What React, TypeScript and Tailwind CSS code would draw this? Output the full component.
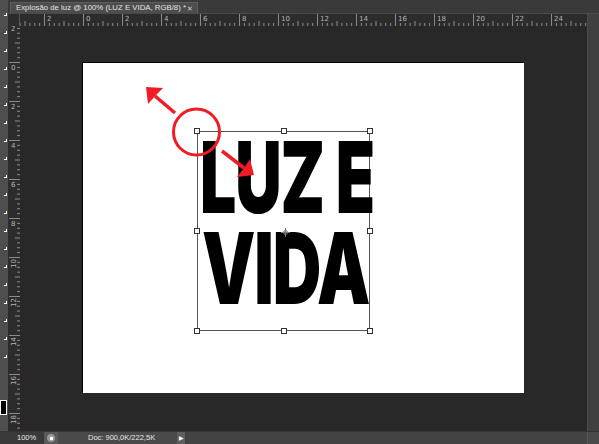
import React from "react";

const MAJOR = 39;

function TopRuler() {
  const labels = ["2", "0", "2", "4", "6", "8", "10", "12", "14", "16", "18", "20", "22", "24"];
  const ticks: React.ReactNode[] = [];
  for (let k = -1; k < 15; k++) {
    const base = 24 + k * MAJOR;
    for (let s = 1; s < 8; s++) {
      const x = base + (s * MAJOR) / 8;
      const h = s === 4 ? 5 : 3;
      ticks.push(<line key={`t${k}-${s}`} x1={x + 0.5} x2={x + 0.5} y1={12 - h} y2={12} stroke="#8a8a8a" strokeWidth={1} />);
    }
  }
  return (
    <svg width={567} height={12} className="block">
      {ticks}
      {labels.map((l, k) => {
        const x = 24 + k * MAJOR;
        return (
          <g key={k}>
            <line x1={x + 0.5} x2={x + 0.5} y1={0} y2={12} stroke="#8a8a8a" strokeWidth={1} />
            <text x={x + 3} y={7} fontSize={7} fill="#b5b5b5" fontFamily="'DejaVu Sans', sans-serif">{l}</text>
          </g>
        );
      })}
    </svg>
  );
}

function LeftRuler() {
  const labels = ["2", "0", "2", "4", "6", "8", "10", "12", "14", "16", "18"];
  const ticks: React.ReactNode[] = [];
  for (let k = -1; k < 11; k++) {
    const base = -3 + k * MAJOR;
    for (let s = 1; s < 8; s++) {
      const y = base + (s * MAJOR) / 8;
      const w = s === 4 ? 5 : 3;
      ticks.push(<line key={`t${k}-${s}`} y1={y + 0.5} y2={y + 0.5} x1={12 - w} x2={12} stroke="#8a8a8a" strokeWidth={1} />);
    }
  }
  return (
    <svg width={12} height={405} className="block">
      {ticks}
      {labels.map((l, k) => {
        const y = -3 + k * MAJOR;
        return (
          <g key={k}>
            <line y1={y + 0.5} y2={y + 0.5} x1={1} x2={12} stroke="#8a8a8a" strokeWidth={1} />
            {l.length === 1 ? (
              <text x={3} y={y + 8} fontSize={7} fill="#b5b5b5" fontFamily="'DejaVu Sans', sans-serif">{l}</text>
            ) : (
              <text x={0} y={0} fontSize={7} fill="#b5b5b5" fontFamily="'DejaVu Sans', sans-serif" transform={`translate(8 ${y + 2}) rotate(-90)`} textAnchor="end">{l}</text>
            )}
          </g>
        );
      })}
    </svg>
  );
}

function Handle({ x, y }: { x: number; y: number }) {
  return (
    <div
      className="absolute w-[6px] h-[6px] bg-white border border-[#333]"
      style={{ left: x - 3, top: y - 3 }}
    />
  );
}

export default function App() {
  const marks = Array.from({ length: 20 }, (_, i) => i);
  return (
    <div className="w-[599px] h-[444px] relative flex flex-col overflow-hidden bg-[#282828] font-['Liberation_Sans',sans-serif]">
      <div className="flex-1 flex min-h-0">
        {/* left tools strip */}
        <div className="w-[8px] h-full bg-[#4e4e4e] flex flex-col items-end pt-[13px] shrink-0">
          {marks.map((i) => (
            <div key={i} className="h-[18px] w-full flex items-start justify-end pr-[1px]">
              <div className="w-[3px] h-[3px] border-r-[1.5px] border-b-[1.5px] border-white" />
            </div>
          ))}
          <div className="w-[7px] h-[15px] border border-white bg-black mr-[1px] mt-[27px]" />
        </div>

        <div className="flex-1 flex flex-col min-w-0">
          {/* tab bar */}
          <div className="h-[14px] bg-[#3a3a3a] flex items-end pl-[2px] border-b border-[#4a4a4a]">
            <div className="h-[11px] w-[188px] bg-[#4d4d4d] border-t border-l border-r border-[#5c5c5c] flex items-center pl-[5px] pr-[4px] overflow-hidden">
              <span className="text-[7.8px] leading-none text-[#e4e4e4] whitespace-nowrap">Explosão de luz @ 100% (LUZ E VIDA, RGB/8) *</span>
              <span className="ml-auto text-[7px] leading-none text-[#d0d0d0]">✕</span>
            </div>
          </div>

          <div className="flex-1 flex min-h-0">
            <div className="flex-1 flex flex-col min-w-0">
              <div className="h-[12px] flex bg-[#2c2c2c]">
                <div className="w-[12px] h-full bg-[#2c2c2c] border-r border-[#555]" />
                <TopRuler />
              </div>
              <div className="flex-1 flex min-h-0">
                <div className="w-[12px] bg-[#2c2c2c] overflow-hidden">
                  <LeftRuler />
                </div>
                <div className="flex-1 bg-[#282828] relative">
                  <div className="ml-[63px] mt-[37px] w-[441px] h-[330px] bg-white relative shadow-[-1px_-1px_0_0_#000]">
                    <div className="absolute left-[114px] top-[68px] w-[173px] h-[200px] border border-[#555]">
                      <div className="absolute left-[2px] top-[-5px] origin-top-left scale-y-[1.66] scale-x-[1.07] text-[60px] leading-none font-black text-black font-['Inter',sans-serif] whitespace-nowrap tracking-[-1px]">
                        LUZ E
                      </div>
                      <div className="absolute left-[4px] top-[86px] origin-top-left scale-y-[1.66] scale-x-[1.12] text-[60px] leading-none font-black text-black font-['Inter',sans-serif] whitespace-nowrap tracking-[-1px]">
                        VIDA
                      </div>
                      <Handle x={-1} y={-1} />
                      <Handle x={86} y={-1} />
                      <Handle x={172} y={-1} />
                      <Handle x={-1} y={99} />
                      <Handle x={172} y={99} />
                      <Handle x={-1} y={199} />
                      <Handle x={86} y={199} />
                      <Handle x={172} y={199} />
                      <svg className="absolute left-[83px] top-[96px]" width={9} height={9} viewBox="0 0 9 9">
                        <circle cx={4.5} cy={4.5} r={2} fill="none" stroke="#777" strokeWidth={1} />
                        <line x1={4.5} x2={4.5} y1={0} y2={9} stroke="#777" strokeWidth={1} />
                        <line y1={4.5} y2={4.5} x1={0} x2={9} stroke="#777" strokeWidth={1} />
                      </svg>
                    </div>
                  </div>
                </div>
              </div>
            </div>
            {/* right scrollbar */}
            <div className="w-[12px] bg-[#404040] border-l border-[#4a4a4a]" />
          </div>
        </div>
      </div>

      {/* status bar */}
      <div className="h-[13px] flex items-stretch bg-[#3e3e3e] border-t border-[#333] shrink-0">
        <div className="w-[44px] flex items-center pl-[17px] bg-[#3a3a3a]">
          <span className="text-[7.5px] leading-none text-[#e8e8e8]">100%</span>
        </div>
        <div className="w-[14px] flex items-center justify-center bg-[#5a5a5a]">
          <div className="w-[8px] h-[8px] rounded-full bg-[#9a9a9a] flex items-center justify-center">
            <div className="w-[3px] h-[3px] bg-white" />
          </div>
        </div>
        <div className="w-[119px] flex items-center pl-[30px] bg-[#4a4a4a]">
          <span className="text-[7.5px] leading-none text-[#e4e4e4] whitespace-nowrap">Doc: 900,0K/222,5K</span>
        </div>
        <div className="w-[8px] flex items-center justify-center bg-[#5e5e5e]">
          <span className="text-[6px] leading-none text-white">▶</span>
        </div>
        <div className="flex-1 bg-[#434343]" />
        <div className="w-[12px] bg-[#4a4a4a] border-l border-[#555]" />
      </div>

      {/* red annotations */}
      <svg className="absolute left-0 top-0 pointer-events-none" width={599} height={444}>
        <circle cx={196.5} cy={132} r={23} fill="none" stroke="#ee1c24" strokeWidth={3} />
        <line x1={175} y1={113} x2={155} y2={96} stroke="#ee1c24" strokeWidth={3.5} />
        <polygon points="146,87 163,88 156,95 148,104" fill="#ee1c24" />
        <line x1={222} y1={151} x2={244} y2={168} stroke="#ee1c24" strokeWidth={3.5} />
        <polygon points="254,175 237,177 244,168 250,159" fill="#ee1c24" />
      </svg>
    </div>
  );
}
